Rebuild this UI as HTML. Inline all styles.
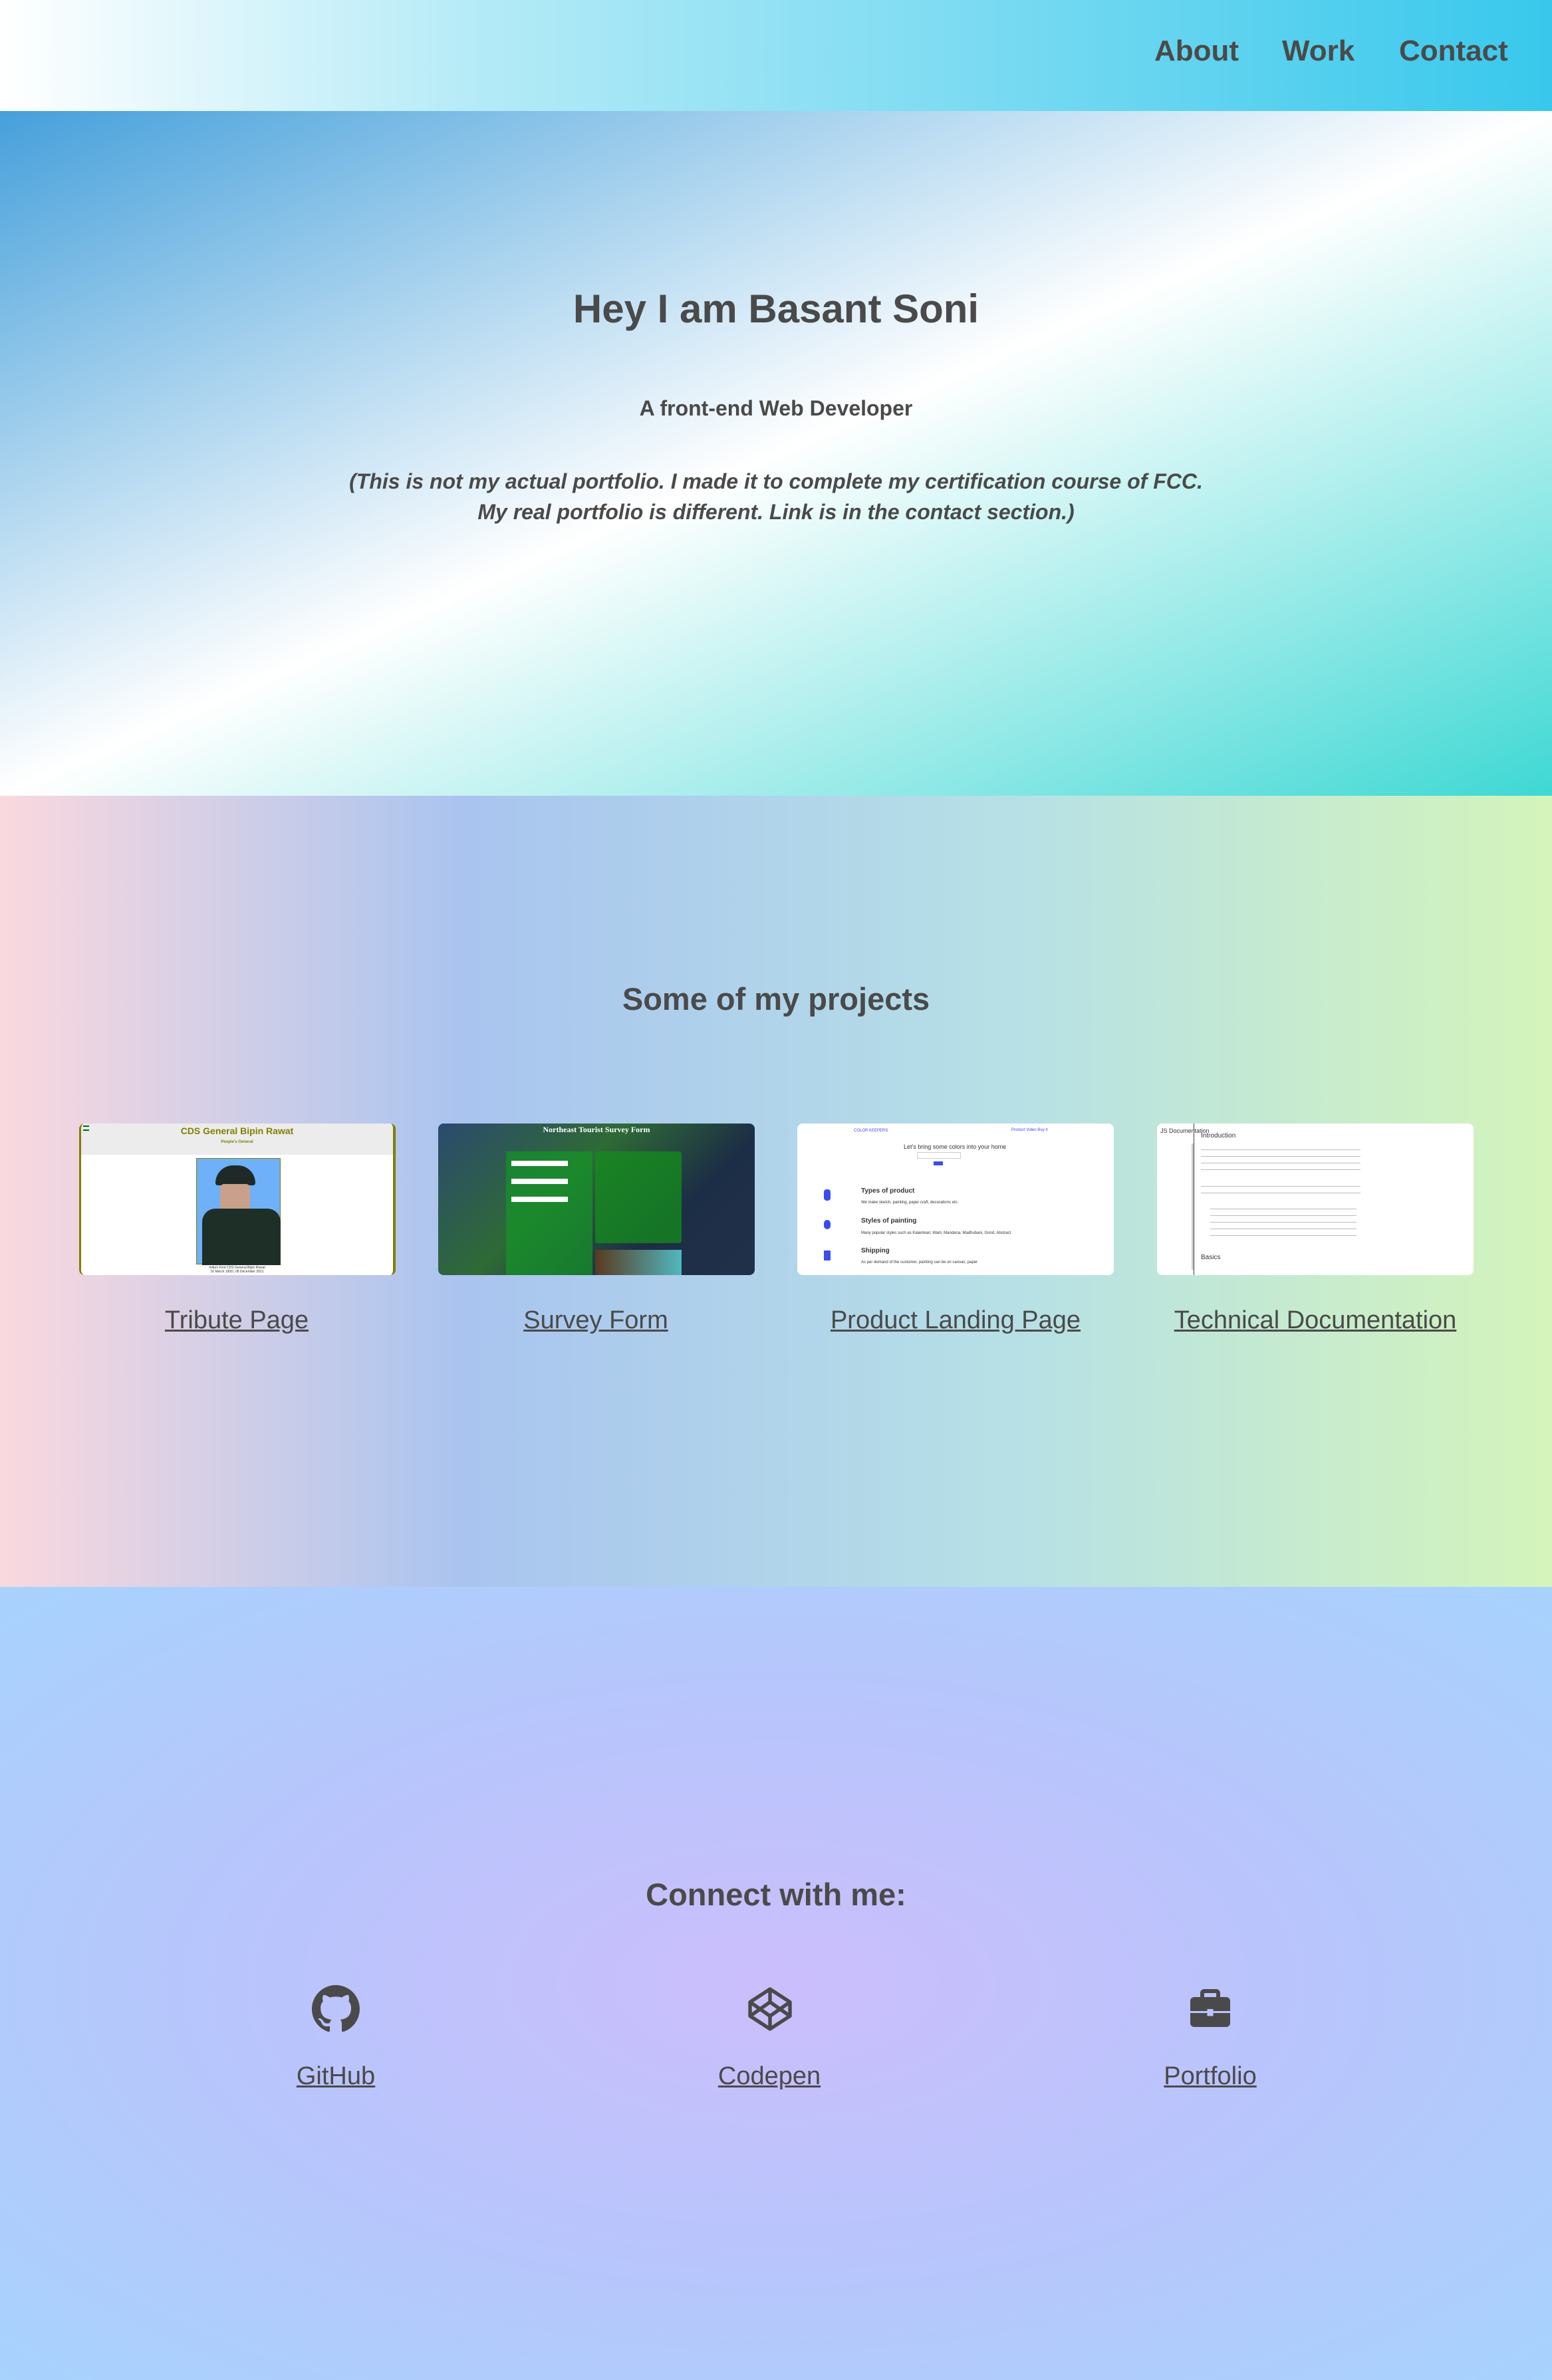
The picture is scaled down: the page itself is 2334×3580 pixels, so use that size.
<!DOCTYPE html>
<html><head><meta charset="utf-8"><style>
*{margin:0;padding:0;box-sizing:border-box}
body{width:2334px;height:3580px;font-family:"Liberation Sans",Arial,sans-serif;color:#4a4a4a;position:relative;overflow:hidden}
.nav{position:absolute;left:0;top:0;width:2334px;height:167px;background:linear-gradient(to right,#fff 0%,#b6ebf7 30%,#38c8ec 100%)}
.nav a{position:absolute;top:52px;font-weight:bold;font-size:44px;color:#4a4a4a;text-decoration:none}
.hero{position:absolute;left:0;top:167px;width:2334px;height:1030px;background:linear-gradient(to bottom right,#46a0db 0%,#fff 50%,#3ed8d4 100%)}
.c{position:absolute;left:0;width:100%;text-align:center}
.proj{position:absolute;left:0;top:1197px;width:2334px;height:1190px;background:linear-gradient(to right,#fad8de 0%,#a9c4ef 30%,#b6e0e6 65%,#d4f4bb 100%)}
.card{position:absolute;top:1690px;width:476px;height:228px;border-radius:8px;overflow:hidden;background:#fff}
.lbl{position:absolute;top:1965px;font-size:38px;text-decoration:underline;color:#4a4a4a;transform:translateX(-50%);white-space:nowrap}
.foot{position:absolute;left:0;top:2387px;width:2334px;height:1193px;background:radial-gradient(ellipse at 50% 50%,#cbbefc 0%,#b8c5fc 50%,#a7d3fd 100%)}
.flbl{position:absolute;top:3102px;font-size:38px;text-decoration:underline;transform:translateX(-50%)}
.ic{position:absolute;top:2986px;width:72px;height:72px;transform:translateX(-50%)}
.t{position:absolute;font-size:6px;color:#333;white-space:nowrap}
</style></head><body>
<div class="nav">
<a style="left:1736px">About</a><a style="left:1928px">Work</a><a style="left:2104px">Contact</a>
</div>
<div class="hero"></div>
<div class="c" style="top:430px;font-size:60px;font-weight:bold">Hey I am Basant Soni</div>
<div class="c" style="top:596px;font-size:32px;font-weight:bold">A front-end Web Developer</div>
<div class="c" style="top:701px;font-size:32px;font-weight:bold;font-style:italic;line-height:46px">(This is not my actual portfolio. I made it to complete my certification course of FCC.<br>My real portfolio is different. Link is in the contact section.)</div>

<div class="proj"></div>
<div class="c" style="top:1475px;font-size:47px;font-weight:bold">Some of my projects</div>

<div class="card" style="left:119px;border-left:3px solid #808000;border-right:4px solid #808000">
 <div style="height:47px;background:#ececec;text-align:center;color:#808000;font-weight:bold;font-size:14px;padding-top:3px">CDS General Bipin Rawat<div style="font-size:6px;margin-top:6px">People's General</div></div>
 <div style="position:absolute;left:3px;top:3px;width:9px;height:8px;border-top:2px solid #060;border-bottom:2px solid #060"></div>
 <div style="position:absolute;left:173px;top:52px;width:127px;height:160px;background:#6eb1f8;border:1px solid #808000">
  <div style="position:absolute;left:28px;top:10px;width:60px;height:30px;background:#1f2a28;border-radius:30px 30px 4px 4px"></div>
  <div style="position:absolute;left:35px;top:38px;width:45px;height:40px;background:#c9a08a;border-radius:6px"></div>
  <div style="position:absolute;left:8px;top:75px;width:118px;height:85px;background:#1e2f28;border-radius:20px 20px 0 0"></div>
 </div>
 <div class="t" style="left:0;right:0;top:214px;text-align:center;font-size:5px">India's First CDS General Bipin Rawat<br>16 March 1958 | 08 December 2021</div>
</div>

<div class="card" style="left:659px;background:linear-gradient(135deg,#2c4a6e,#2e6a36 40%,#1c2e45 70%,#21304a)">
 <div style="text-align:center;color:#fff;font-family:'Liberation Serif',serif;font-weight:bold;font-size:12px;margin-top:2px">Northeast Tourist Survey Form</div>
 <div style="position:absolute;left:102px;top:42px;width:130px;height:190px;background:rgba(20,150,40,.7)"></div>
 <div style="position:absolute;left:236px;top:42px;width:130px;height:138px;background:rgba(20,140,30,.75);border-radius:4px"></div>
 <div style="position:absolute;left:110px;top:56px;width:85px;height:8px;background:#fff"></div>
 <div style="position:absolute;left:110px;top:83px;width:85px;height:8px;background:#fff"></div>
 <div style="position:absolute;left:110px;top:110px;width:85px;height:8px;background:#fff"></div>
 <div style="position:absolute;left:236px;top:190px;width:130px;height:40px;background:linear-gradient(to right,#5a3a20,#4fb8c0)"></div>
</div>

<div class="card" style="left:1199px">
 <div class="t" style="left:85px;top:8px;color:#3a4cf0;font-size:6px">COLOR KEEPERS</div>
 <div class="t" style="left:322px;top:7px;color:#3a4cf0;font-size:6px">Product Video Buy It</div>
 <div class="t" style="left:160px;top:30px;font-size:9px">Let's bring some colors into your home</div>
 <div style="position:absolute;left:180px;top:43px;width:66px;height:10px;border:1px solid #ccc"></div>
 <div style="position:absolute;left:205px;top:57px;width:14px;height:6px;background:#3a4cf0"></div>
 <div style="position:absolute;left:40px;top:99px;width:10px;height:17px;background:#3a4cf0;border-radius:4px"></div>
 <div style="position:absolute;left:40px;top:145px;width:10px;height:14px;background:#3a4cf0;border-radius:5px"></div>
 <div style="position:absolute;left:40px;top:191px;width:10px;height:15px;background:#3a4cf0"></div>
 <div class="t" style="left:96px;top:96px;font-size:10px;font-weight:bold">Types of product</div>
 <div class="t" style="left:96px;top:116px">We make sketch, painting, paper craft, decorations etc.</div>
 <div class="t" style="left:96px;top:141px;font-size:10px;font-weight:bold">Styles of painting</div>
 <div class="t" style="left:96px;top:162px">Many popular styles such as Kalamkari, Warli, Mandana, Madhubani, Gond, Abstract</div>
 <div class="t" style="left:96px;top:186px;font-size:10px;font-weight:bold">Shipping</div>
 <div class="t" style="left:96px;top:206px">As per demand of the customer, painting can be on canvas, paper</div>
</div>

<div class="card" style="left:1740px">
 <div style="position:absolute;left:0;top:0;width:56px;height:228px;border-right:1px solid #444;background:#fff"></div>
 <div style="position:absolute;left:52px;top:30px;width:3px;height:190px;background:#ccc"></div>
 <div class="t" style="left:5px;top:6px;font-size:9px">JS Documentation</div>
 <div class="t" style="left:66px;top:13px;font-size:10px">Introduction</div>
 <div style="position:absolute;left:66px;top:33px;width:240px;height:45px;background:repeating-linear-gradient(#fff 0,#fff 6px,#bbb 6px,#bbb 7px,#fff 7px,#fff 10px)"></div>
 <div style="position:absolute;left:66px;top:88px;width:240px;height:25px;background:repeating-linear-gradient(#fff 0,#fff 6px,#bbb 6px,#bbb 7px,#fff 7px,#fff 10px)"></div>
 <div style="position:absolute;left:80px;top:122px;width:220px;height:55px;background:repeating-linear-gradient(#fff 0,#fff 6px,#bbb 6px,#bbb 7px,#fff 7px,#fff 10px)"></div>
 <div class="t" style="left:66px;top:196px;font-size:10px">Basics</div>
</div>

<a class="lbl" style="left:356px">Tribute Page</a>
<a class="lbl" style="left:896px">Survey Form</a>
<a class="lbl" style="left:1437px">Product Landing Page</a>
<a class="lbl" style="left:1978px">Technical Documentation</a>

<div class="foot"></div>
<div class="c" style="top:2822px;font-size:47px;font-weight:bold">Connect with me:</div>

<svg class="ic" style="left:505px" viewBox="0 0 16 16"><path fill="#4a4a4a" d="M8 0C3.58 0 0 3.58 0 8c0 3.540 2.29 6.53 5.47 7.59.4.07.55-.17.55-.38 0-.19-.01-.82-.01-1.49-2.01.37-2.530-.49-2.69-.94-.09-.23-.48-.94-.82-1.13-.28-.15-.68-.52-.01-.53.63-.01 1.08.58 1.23.82.72 1.21 1.87.87 2.33.66.07-.52.28-.87.51-1.07-1.78-.2-3.64-.89-3.64-3.95 0-.87.31-1.59.82-2.150-.08-.2-.36-1.02.08-2.12 0 0 .67-.21 2.2.82.64-.18 1.32-.27 2-.27.68 0 1.36.09 2 .27 1.53-1.04 2.2-.82 2.2-.82.44 1.1.16 1.92.08 2.12.51.56.82 1.27.82 2.15 0 3.07-1.87 3.75-3.65 3.95.29.25.54.73.54 1.48 0 1.07-.01 1.93-.01 2.2 0 .21.15.46.55.38A8.013 8.013 0 0016 8c0-4.42-3.58-8-8-8z"/></svg>
<svg class="ic" style="left:1158px" viewBox="0 0 24 24"><g fill="none" stroke="#4a4a4a" stroke-width="1.8" stroke-linejoin="round"><path d="M12 2L22 8.5V15.5L12 22L2 15.5V8.5Z"/><path d="M12 2V8.5M12 15.5V22M2 8.5L12 15.5L22 8.5M2 15.5L12 8.5L22 15.5"/></g></svg>
<svg class="ic" style="left:1820px" viewBox="0 0 24 24"><path fill="#4a4a4a" d="M9 2h6a2 2 0 012 2v2h3a2 2 0 012 2v5h-8.5v-1h-3v1H2V8a2 2 0 012-2h3V4a2 2 0 012-2zm0 2v2h6V4zM2 14h8.5v1.5h3V14H22v5a2 2 0 01-2 2H4a2 2 0 01-2-2z"/></svg>

<a class="flbl" style="left:505px">GitHub</a>
<a class="flbl" style="left:1157px">Codepen</a>
<a class="flbl" style="left:1820px">Portfolio</a>
</body></html>
